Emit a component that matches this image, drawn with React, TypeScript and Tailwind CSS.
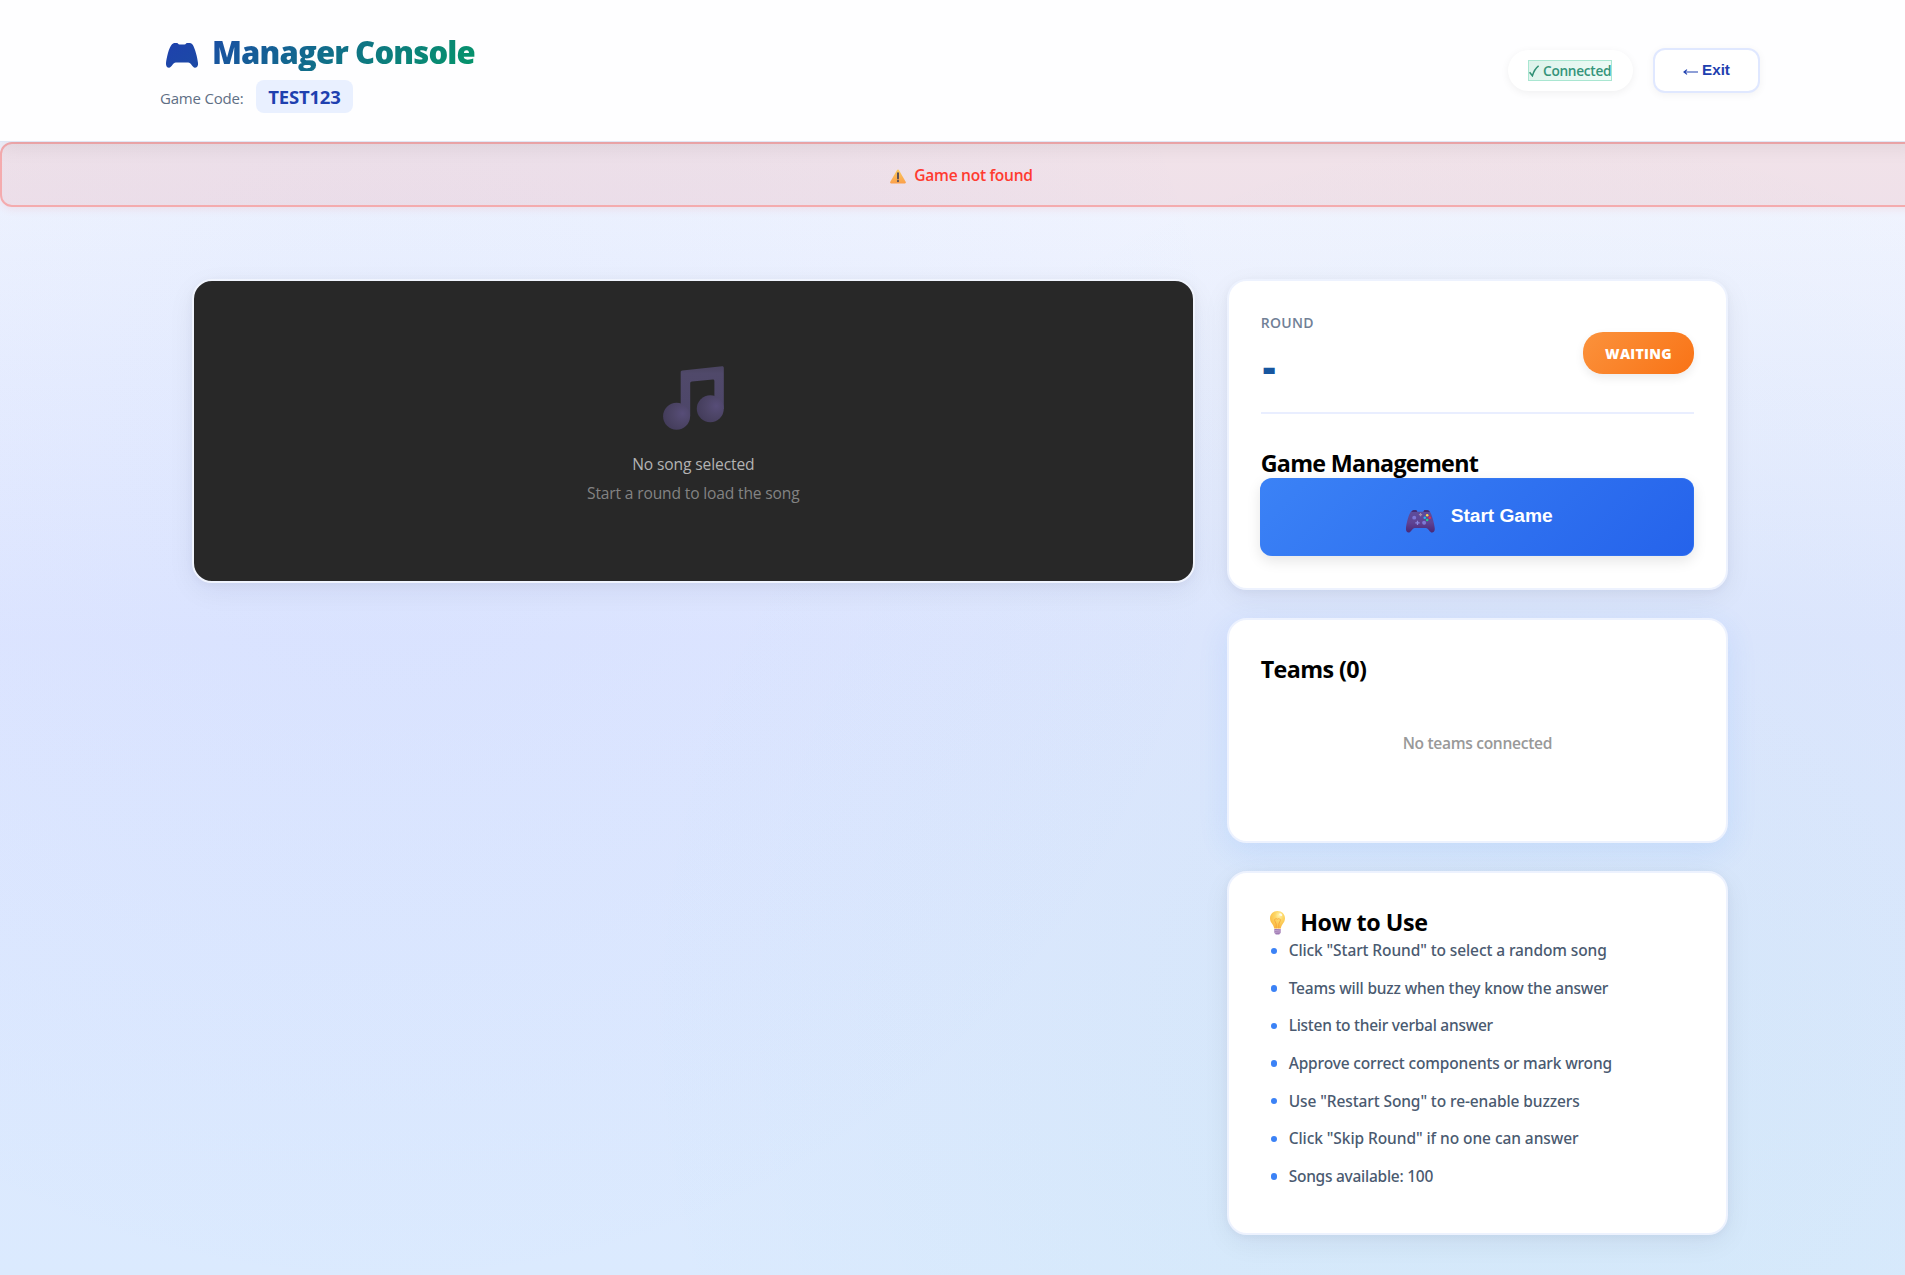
const PAD =
  "M6 1.2C7 .3 8 0 9.5 0H11C12.2 0 12 1.6 13.5 1.6H18.5C20 1.6 19.8 0 21 0H22.5C24.5 0 25.5.3 26.5 1.5C29 5 31.5 15 32 20C32.3 23.3 30.7 24.7 29 24.7C26.3 24.7 25 19.6 22.2 19.6H9.8C7 19.6 5.7 24.7 3 24.7C1.2 24.7-.2 23.3 0 20C.5 15 3 4 6 1.2Z";

function PadSilhouette() {
  return (
    <svg className="ml-1.5 mt-[12px] h-[25px] w-8 shrink-0" viewBox="0 0 32 25">
      <defs>
        <linearGradient id="padTone" x1="0" y1="0" x2="1" y2="1">
          <stop offset="0" stopColor="#1e41ad" />
          <stop offset="1" stopColor="#1c4aa5" />
        </linearGradient>
      </defs>
      <path d={PAD} fill="url(#padTone)" />
    </svg>
  );
}

function PadColor() {
  return (
    <svg className="mt-2 h-[23px] w-9 shrink-0" viewBox="-5.5 0 40 25">
      <defs>
        <linearGradient id="padBody" x1="0" y1="0" x2="0" y2="1">
          <stop offset="0" stopColor="#5f4c98" />
          <stop offset="0.55" stopColor="#61408f" />
          <stop offset="1" stopColor="#4b2370" />
        </linearGradient>
      </defs>
      <path d={PAD} fill="url(#padBody)" opacity="0.95" />
      <path d="M6 1.6C7 .3 8 0 9.5 0H11C12 0 12.2.8 12.4 1.6ZM19.5 1.6C19.7.8 20 0 21 0H22.5C24.5 0 25.8.4 26.5 1.6Z" fill="#3d2266" />
      <circle cx="9.2" cy="8.2" r="2.2" fill="#7d79d6" />
      <circle cx="20.2" cy="14" r="2.2" fill="#7d79d6" />
      <path d="M12.8 11.6V16.4M10.4 14H15.2" stroke="#8a87e0" strokeWidth="1.4" />
      <path d="M16.2 3V6.6M14.4 4.8H18" stroke="#a08bb0" strokeWidth="1.3" />
      <circle cx="23.6" cy="5.6" r="1.4" fill="#fcd34d" />
      <circle cx="26.4" cy="8.3" r="1.4" fill="#f0284a" />
      <circle cx="23.6" cy="10.9" r="1.4" fill="#22d38a" />
      <circle cx="20.9" cy="8.3" r="1.4" fill="#22b8f0" />
    </svg>
  );
}

function WarningIcon() {
  return (
    <svg className="mt-[3px] h-[15px] w-4" viewBox="0 0 16 15">
      <defs>
        <linearGradient id="warn" x1="0" y1="0" x2="0" y2="1">
          <stop offset="0" stopColor="#fbcb5e" />
          <stop offset="1" stopColor="#fba04b" />
        </linearGradient>
      </defs>
      <path d="M7.1.9C7.5.2 8.5.2 8.9.9L15.8 13.1C16.1 13.8 15.7 14.4 15 14.4H1C.3 14.4-.1 13.8.2 13.1Z" fill="url(#warn)" />
      <path d="M8 4.2V9.6" stroke="#4a4658" strokeWidth="1.8" strokeLinecap="round" />
      <circle cx="8" cy="12.1" r="1.05" fill="#4a4658" />
    </svg>
  );
}

function NoteIcon() {
  return (
    <svg className="ml-px h-16 w-[61px]" viewBox="0 0 61 64">
      <defs>
        <linearGradient id="beam" x1="0" y1="0" x2="0" y2="1">
          <stop offset="0" stopColor="#4a4460" />
          <stop offset="0.15" stopColor="#50496a" />
          <stop offset="1" stopColor="#4d4669" />
        </linearGradient>
        <radialGradient id="head" cx="0.72" cy="0.4" r="0.75">
          <stop offset="0" stopColor="#574d78" />
          <stop offset="0.5" stopColor="#4d4567" />
          <stop offset="1" stopColor="#433c5a" />
        </radialGradient>
      </defs>
      <path
        d="M17.7 6.2C17.7 5.2 18.3 4.6 19.3 4.5L59 .3C60.1.2 60.8.8 60.8 1.8V43H51.4V15.2C51.4 14 50.9 13.4 49.7 13.5L29 15.6C27.8 15.7 27.2 16.4 27.2 17.6V50H17.7Z"
        fill="url(#beam)"
      />
      <circle cx="13.6" cy="50.2" r="13.5" fill="url(#head)" />
      <circle cx="47.3" cy="42.7" r="13.5" fill="url(#head)" />
    </svg>
  );
}

function BulbIcon() {
  return (
    <svg className="ml-[9px] mt-[5.5px] h-6 w-[15px]" viewBox="0 0 15 24">
      <defs>
        <radialGradient id="glass" cx="0.62" cy="0.25" r="0.8">
          <stop offset="0" stopColor="#fff3ae" />
          <stop offset="0.35" stopColor="#fdd766" />
          <stop offset="1" stopColor="#fbb53c" />
        </radialGradient>
      </defs>
      <path d="M7.5 0C11.8 0 15 3.2 15 7.3C15 9.9 13.8 11.7 12.4 13.5C11.4 14.8 11.1 16 10.9 17.6H4.1C3.9 16 3.6 14.8 2.6 13.5C1.2 11.7 0 9.9 0 7.3C0 3.2 3.2 0 7.5 0Z" fill="url(#glass)" />
      <path d="M6.2 17.3V13L4.7 9.6C4.2 8 6 7.2 7.5 8.2C9 7.2 10.8 8 10.3 9.6L8.8 13V17.3" stroke="#f5a03a" strokeWidth="0.8" fill="none" />
      <ellipse cx="10.7" cy="3.6" rx="1.7" ry="1.1" transform="rotate(40 10.7 3.6)" fill="#fffbe6" />
      <path d="M4.3 18H10.7V21.4C10.7 22 10.4 22.3 9.8 22.4L9.3 23.4H5.7L5.2 22.4C4.6 22.3 4.3 22 4.3 21.4Z" fill="#a07bb4" />
      <path d="M4.3 19.6L10.7 19M4.3 21.4L10.7 20.8" stroke="#cdb4d8" strokeWidth="0.7" />
    </svg>
  );
}

const TIPS = [
  { text: 'Click "Start Round" to select a random song', spacing: "tracking-[-0.1px]" },
  { text: "Teams will buzz when they know the answer", spacing: "tracking-[-0.18px]" },
  { text: "Listen to their verbal answer", spacing: "tracking-[-0.26px]" },
  { text: "Approve correct components or mark wrong", spacing: "tracking-[-0.15px]" },
  { text: 'Use "Restart Song" to re-enable buzzers', spacing: "tracking-[-0.1px]" },
  { text: 'Click "Skip Round" if no one can answer', spacing: "tracking-[-0.07px]" },
  { text: "Songs available: 100", spacing: "tracking-[-0.26px]" },
];

const CARD = "rounded-[20px] border-2 border-[#edf2fe] bg-white p-8";
const GREY_SHADOW = "shadow-[0_8px_28px_rgba(20,25,50,0.06),0_2px_8px_rgba(20,25,50,0.04)]";
const HEADING = "text-[23.3px] font-bold text-black";

function Header() {
  return (
    <header className="relative z-10 flex h-[142px] items-center justify-between border-b border-[#e0e7f5] bg-[#fefeff] px-40 shadow-[0_4px_20px_rgba(0,0,0,0.08)]">
      <div className="flex h-full flex-col pt-[31px]">
        <div className="flex h-10 gap-[14px]">
          <PadSilhouette />
          <h1 className="-ml-[53px] bg-[linear-gradient(135deg,#1e40af_0%,#059669_100%)] bg-clip-text pl-[53px] text-[31px] leading-[42px] font-extrabold tracking-[-0.85px] whitespace-nowrap text-transparent">
            Manager Console
          </h1>
        </div>
        <div className="mt-[9px] flex items-center gap-[13px]">
          <span className="pt-[3px] text-[15px] leading-6 tracking-[-0.2px] text-[#5f6f85]">Game Code:</span>
          <span className="flex h-[33px] w-[97px] items-center justify-center rounded-lg bg-[#e9f0ff] pr-px text-[18.5px] font-bold tracking-[-0.2px] text-[#1e40af]">
            TEST123
          </span>
        </div>
      </div>
      <div className="flex items-center gap-5">
        <div className="flex h-[41px] w-[125px] items-center justify-center rounded-full bg-white pr-px shadow-[0_2px_8px_rgba(0,0,0,0.06)]">
          <span className="flex h-[21px] w-[84px] items-center border border-[#a9e6d1] bg-[linear-gradient(135deg,#ddf3eb,#f0fbf7)] pt-px text-[13.7px] font-semibold tracking-[-0.3px] text-[#35947a]">
            <svg className="mr-1 h-3 w-2.5 shrink-0" viewBox="0 0 10 12">
              <path d="M.6 7.2L3.4 10.8C4.6 6.6 6.4 3.2 9.6.8" fill="none" stroke="#2f8f74" strokeWidth="1.5" />
            </svg>
            Connected
          </span>
        </div>
        <button className="flex h-[45px] w-[107px] items-center justify-center rounded-xl border-2 border-[#e0e8ff] bg-white font-['Liberation_Sans',sans-serif] text-[15.2px] font-bold text-[#1e40af] shadow-[0_2px_8px_rgba(0,0,0,0.05)]">
          <svg className="mt-[3px] mr-1 h-2 w-[15px]" viewBox="0 0 15 8">
            <path d="M1 4H15M4 1.6L1 4L4 6.4" fill="none" stroke="#1e40af" strokeWidth="1.2" />
          </svg>
          Exit
        </button>
      </div>
    </header>
  );
}

export default function App() {
  return (
    <div className="h-[1275px] w-full overflow-hidden font-['Open_Sans','Noto_Sans',sans-serif]">
      <div className="h-full w-[1920px] bg-[radial-gradient(circle_at_20%_35%,rgba(59,130,246,0.045)_0%,transparent_50%),radial-gradient(circle_at_80%_80%,rgba(16,185,129,0.045)_0%,transparent_50%),linear-gradient(180deg,#f8fafe_0%,#dfe6ff_50%,#dbeafe_100%)]">
        <Header />
        <div className="flex h-[65px] items-center justify-center gap-2 rounded-xl border-2 border-[#f4abae] bg-[rgba(236,60,50,0.1)] pl-[3px] text-[15.6px] font-semibold tracking-[-0.3px] text-[#ff3b30] shadow-[0_2px_8px_rgba(255,59,48,0.1)]">
          <WarningIcon />
          <span className="pt-0.5">Game not found</span>
        </div>
        <main className="mx-auto grid w-[1536px] grid-cols-[2fr_1fr] items-start gap-8 pt-[72px]">
          <section className={`${GREY_SHADOW} flex h-[304px] flex-col items-center rounded-[20px] border-2 border-[#f0f4fe] bg-[#282828] pt-[85px] text-[15.6px] leading-6`}>
            <NoteIcon />
            <p className="mt-[22px] tracking-[-0.12px] text-[#b3b3b3]">No song selected</p>
            <p className="mt-[5px] tracking-[-0.16px] text-[#838383]">Start a round to load the song</p>
          </section>
          <div className="flex flex-col gap-7">
            <section className={`${CARD} ${GREY_SHADOW} h-[311px]`}>
              <div className="flex h-[101px] items-start justify-between border-b-2 border-[#e9eeff]">
                <div>
                  <div className="text-sm leading-5 font-semibold tracking-[0.3px] text-[#718096]">ROUND</div>
                  <div className="mt-[7px] pl-0.5 text-[40px] leading-[54px] font-extrabold text-[#17569f]">-</div>
                </div>
                <div className="mt-[19px] flex h-[42px] w-[111px] items-center justify-center rounded-[20px] bg-[linear-gradient(135deg,#fb923c,#f97316)] pt-px text-sm font-extrabold tracking-[0.3px] text-white shadow-[0_4px_10px_rgba(0,0,0,0.08)]">
                  WAITING
                </div>
              </div>
              <h2 className={`${HEADING} relative z-1 mt-[33px] h-[31px] leading-[33px] tracking-[-0.7px]`}>Game Management</h2>
              <button className="-ml-px flex h-[78px] w-[434px] items-center justify-center gap-[14px] rounded-xl bg-[linear-gradient(135deg,#3b82f6,#2563eb)] font-['Liberation_Sans',sans-serif] text-[19.2px] font-bold tracking-[-0.05px] text-white shadow-[inset_0_0_0_1px_rgba(59,130,246,0.35),0_5px_14px_rgba(0,0,0,0.1)]">
                <PadColor />
                <span className="-mt-0.5">Start Game</span>
              </button>
            </section>
            <section className={`${CARD} h-[225px] shadow-[0_8px_30px_rgba(59,130,246,0.12)]`}>
              <h2 className={`${HEADING} leading-[34px] tracking-[-0.6px]`}>Teams (0)</h2>
              <p className="pt-[45px] text-center text-[15.6px] leading-6 font-semibold tracking-[-0.32px] text-[#999]">No teams connected</p>
            </section>
            <section className={`${CARD} ${GREY_SHADOW} h-[364px]`}>
              <h2 className={`${HEADING} flex h-[33px] gap-[15.5px] leading-[34px] tracking-[-0.45px]`}>
                <BulbIcon />
                How to Use
              </h2>
              <ul className="flex flex-col gap-3 pl-[10px] font-['Noto_Sans',sans-serif] text-[15.5px] font-medium text-[#4a5a70]">
                {TIPS.map((tip) => (
                  <li key={tip.text} className={`${tip.spacing} flex h-[25.6px] items-center gap-[11.5px]`}>
                    <span className="size-[6.5px] rounded-full bg-[#3b82f6]" />
                    {tip.text}
                  </li>
                ))}
              </ul>
            </section>
          </div>
        </main>
      </div>
    </div>
  );
}
